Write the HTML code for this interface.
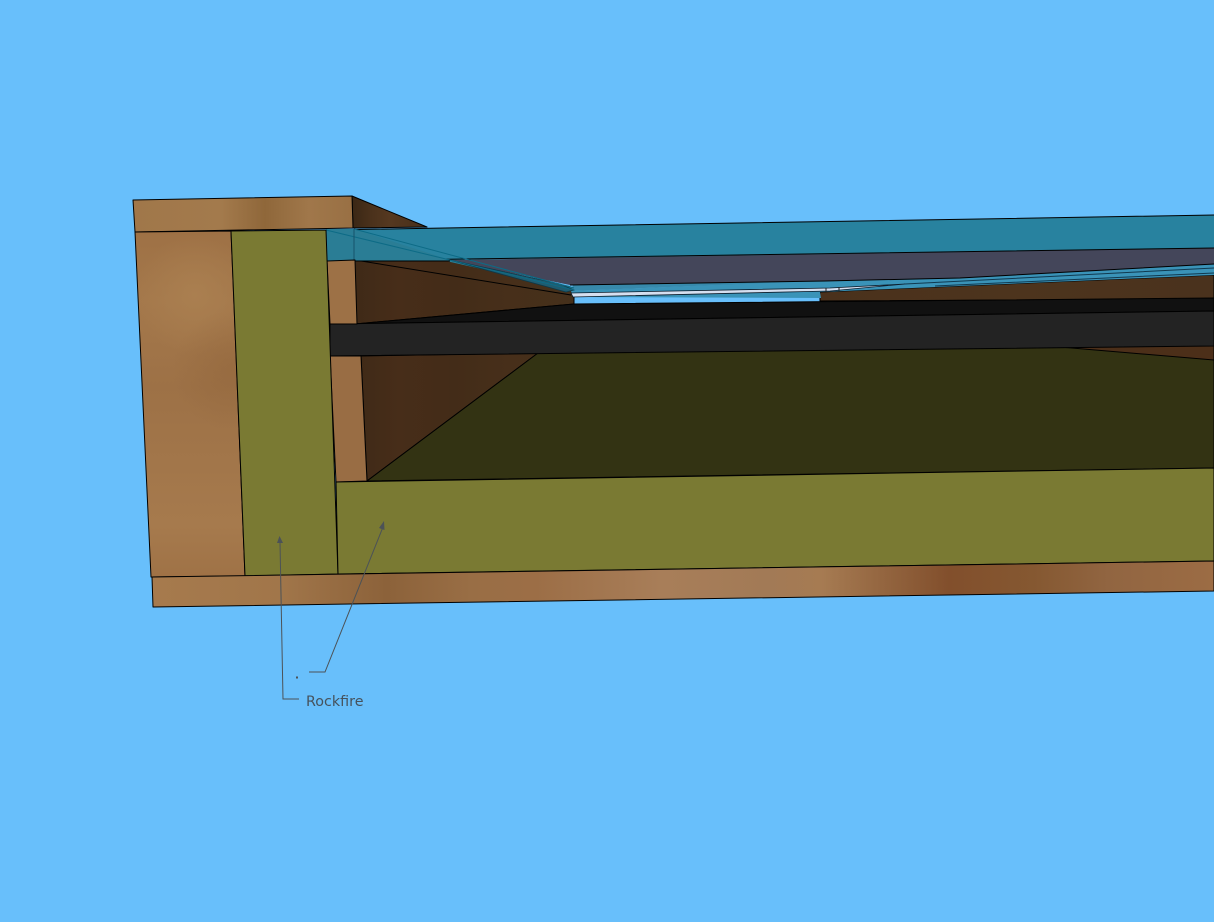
<!DOCTYPE html>
<html lang="en">
<head>
<meta charset="utf-8">
<title>Rockfire</title>
<style>
html,body{margin:0;padding:0;background:#68bffb;width:1214px;height:922px;overflow:hidden}
svg{display:block}
</style>
</head>
<body>
<svg width="1214" height="922" viewBox="0 0 1214 922" xmlns="http://www.w3.org/2000/svg">
<defs>
<linearGradient id="top" gradientUnits="userSpaceOnUse" x1="133" y1="0" x2="353" y2="0">
<stop offset="0" stop-color="#a0774a"/><stop offset=".4" stop-color="#a37a4c"/><stop offset=".6" stop-color="#8f673a"/><stop offset=".68" stop-color="#966e41"/><stop offset=".8" stop-color="#a0774a"/><stop offset="1" stop-color="#997044"/>
</linearGradient>
<linearGradient id="bottom" gradientUnits="userSpaceOnUse" x1="153" y1="0" x2="1214" y2="0">
<stop offset="0" stop-color="#a67a4d"/><stop offset=".12" stop-color="#a1764a"/><stop offset=".22" stop-color="#8c623a"/><stop offset=".3" stop-color="#996e45"/><stop offset=".36" stop-color="#9c6e46"/><stop offset=".48" stop-color="#a87e59"/><stop offset=".58" stop-color="#a27a56"/><stop offset=".63" stop-color="#a67b52"/><stop offset=".7" stop-color="#90613c"/><stop offset=".75" stop-color="#824f2c"/><stop offset=".83" stop-color="#855831"/><stop offset=".9" stop-color="#916541"/><stop offset="1" stop-color="#9c6c44"/>
</linearGradient>
<radialGradient id="blotchDark" gradientUnits="userSpaceOnUse" cx="232" cy="370" r="60">
<stop offset="0" stop-color="#8f6339" stop-opacity=".45"/><stop offset="1" stop-color="#8f6339" stop-opacity="0"/>
</radialGradient>
<radialGradient id="blotchLight" gradientUnits="userSpaceOnUse" cx="195" cy="295" r="60">
<stop offset="0" stop-color="#aa7f50"/><stop offset="1" stop-color="#aa7f50" stop-opacity="0"/>
</radialGradient>
<linearGradient id="leftBase" gradientUnits="userSpaceOnUse" x1="0" y1="232" x2="0" y2="577">
<stop offset="0" stop-color="#9e7145"/><stop offset=".2" stop-color="#a4784b"/><stop offset=".45" stop-color="#9d7146"/><stop offset=".85" stop-color="#a67a4d"/><stop offset="1" stop-color="#9f7246"/>
</linearGradient>
<linearGradient id="brown" gradientUnits="userSpaceOnUse" x1="355" y1="0" x2="575" y2="0">
<stop offset="0" stop-color="#3f2a17"/><stop offset=".2" stop-color="#472d19"/><stop offset=".45" stop-color="#432c18"/><stop offset=".7" stop-color="#472f1a"/><stop offset="1" stop-color="#45301b"/>
</linearGradient>
<linearGradient id="side" gradientUnits="userSpaceOnUse" x1="352" y1="0" x2="427" y2="0">
<stop offset="0" stop-color="#3a2715"/><stop offset=".25" stop-color="#4a311b"/><stop offset=".5" stop-color="#553820"/><stop offset="1" stop-color="#462e19"/>
</linearGradient>
<linearGradient id="strip" gradientUnits="userSpaceOnUse" x1="820" y1="0" x2="1214" y2="0">
<stop offset="0" stop-color="#4a311c"/><stop offset=".5" stop-color="#4d341d"/><stop offset="1" stop-color="#4a321d"/>
</linearGradient>
</defs>
<rect width="1214" height="922" fill="#68bffb"/>

<g stroke="#000" stroke-width="1" stroke-linejoin="round">
<path d="M352 196L427 227L353 228Z" fill="url(#side)"/>
<path d="M355 260L446 259L574 290V304L355 324Z" fill="url(#brown)"/>
<path d="M355 260L571 295" fill="none"/>
<path d="M361 356L538 353L367 481Z" fill="url(#brown)"/>
<path d="M820 292L1214 275V299L820 301Z" fill="url(#strip)"/>
<path d="M367 481L538 353L1214 345V468Z" fill="#333313"/>
<path d="M1060 347L1214 343V360Z" fill="#4c2f19"/>

<path d="M571 291L1214 264V275L820 292L821 298L573 297Z" fill="#3a93b8" stroke="none"/>
<path d="M571 293L830 288L905 284L830 291L573 297Z" fill="#d5dff0" stroke="#0b1c2b" stroke-width=".8"/>
<path d="M573 285L1214 260V265L571 291Z" fill="#3789ab" stroke="none"/>
<path d="M905 284L1214 268M935 286L1214 273" fill="none" stroke="#10394f" stroke-width="1"/>
<path d="M826 288V292M839 287V291" fill="none" stroke="#222" stroke-width="1"/>
<path d="M448 260L1214 247V264L960 278L825 281L570 285Z" fill="#44465a" stroke="none"/>
<path d="M570 285L825 281L960 278L1214 264" fill="none"/>
<path d="M326 230L1214 215V248L450 260L326 261Z" fill="#28829f" stroke="none"/>
<path d="M326 230L1214 215M326 261L1214 248" fill="none"/>
<path d="M354 229H326V261H446L574 290L570 286L450 260Z" fill="#2a7d95" stroke="none"/>
<path d="M446 259L560 284L574 290L566 292Z" fill="#1f5c70" stroke="#0e3948" stroke-width=".8"/>
<path d="M326 230L574 290M354 229L574 288" fill="none" stroke="#0d6b86" stroke-width="1"/>
<path d="M354 229V261" fill="none" stroke="#15536a"/>
<path d="M326 261H450" fill="none"/>

<path d="M355 324L574 304L1214 298V311L330 324Z" fill="#111111"/>
<path d="M330 324L1214 311V346L330 356Z" fill="#232323"/>

<path d="M327 261L355 260L357 324L330 324Z" fill="#9d7146"/>
<path d="M330 356L361 356L367 481L336 482Z" fill="#996d44"/>

<path d="M133 200L352 196L353 228L135 232Z" fill="url(#top)"/>
<path d="M135 232L231 231L245 576L151 577Z" fill="url(#leftBase)"/>
<path d="M135 232L231 231L245 576L151 577Z" fill="url(#blotchLight)" stroke="none"/>
<path d="M135 232L231 231L245 576L151 577Z" fill="url(#blotchDark)" stroke="none"/>
<path d="M231 231L326 230L338 574L245 576Z" fill="#7a7a33"/>
<path d="M336 482L1214 468V561L338 574Z" fill="#7a7a33"/>
<path d="M152 577L1214 561V591L153 607Z" fill="url(#bottom)"/>
</g>

<g fill="none" stroke="#4c5257" stroke-width="1">
<path d="M280 542L283 699H299"/>
<path d="M383 527L325 672H309"/>
</g>
<path d="M279.500 536L277 543H283Z" fill="#4c5257"/>
<path d="M384 521L379 528L384.500 530Z" fill="#4c5257"/>
<rect x="296" y="676.500" width="2" height="2" fill="#4c5257"/>
<text x="306" y="706" font-family="'DejaVu Sans',sans-serif" font-size="14" fill="#46525c" textLength="57.500" lengthAdjust="spacingAndGlyphs">Rockfire</text>
</svg>
</body>
</html>
